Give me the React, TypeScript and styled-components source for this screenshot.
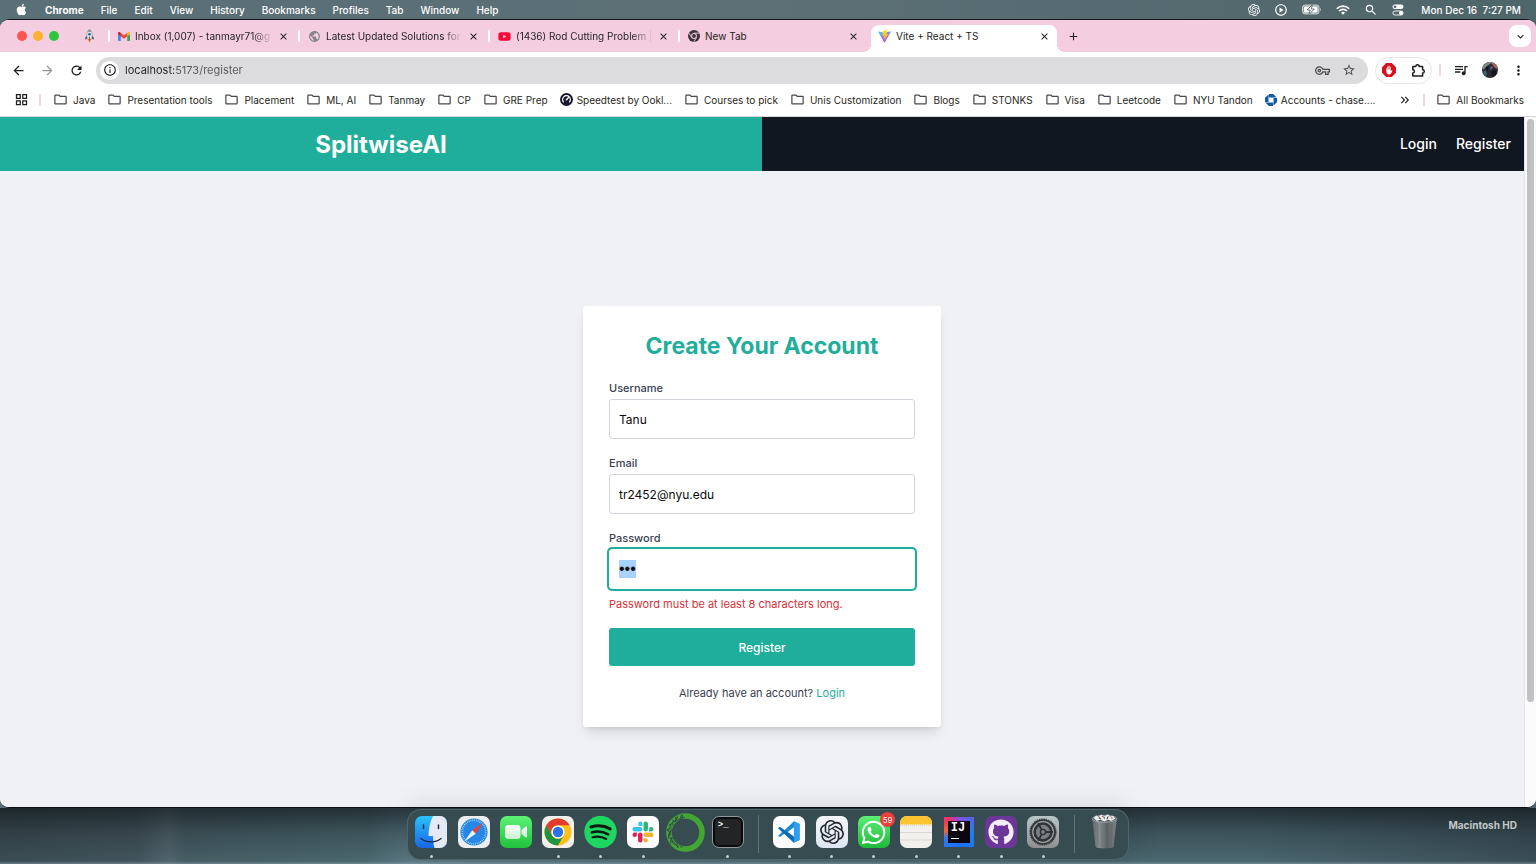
import React, { useEffect, useRef } from 'react';
import styled, { createGlobalStyle, css } from 'styled-components';
import { FaApple, FaYoutube, FaWhatsapp, FaGithub } from 'react-icons/fa';
import { SiOpenai } from 'react-icons/si';
import {
  MdArrowBack, MdArrowForward, MdRefresh, MdInfoOutline, MdOutlineVpnKey, MdStarBorder,
  MdQueueMusic, MdMoreVert, MdClose, MdAdd, MdKeyboardArrowDown,
  MdKeyboardDoubleArrowRight, MdPublic, MdOutlineFolder, MdOutlineGridView,
  MdOutlinePlayCircle, MdSearch,
} from 'react-icons/md';

const teal = '#1fae9b';
const pink = '#f4cde0';
const chromeInk = '#1f1f21';

const GlobalStyle = createGlobalStyle`
  *, *::before, *::after { box-sizing: border-box; }
  body { margin: 0; font-family: Inter, "Liberation Sans", sans-serif; background: #3b4f55; }
  button, input { font: inherit; margin: 0; }
  button { border: 0; padding: 0; background: none; color: inherit; cursor: pointer; }
  a { color: inherit; text-decoration: none; }
  svg { display: block; flex: none; }
`;

const Desktop = styled.div`
  height: 100vh;
  display: flex;
  flex-direction: column;
  background: linear-gradient(90deg, #5a6f76, #5c7076 50%, #4e656a);
`;

/* ---------- system menu bar ---------- */

const MenuBar = styled.header`
  height: 19px;
  flex: none;
  display: flex;
  align-items: center;
  justify-content: space-between;
  padding: 0 15px;
  color: #fff;
  font-size: 10px;
  font-weight: 500;
  white-space: nowrap;
`;

const MenuList = styled.nav`
  display: flex;
  align-items: center;
  gap: 17px;
`;

const MenuItem = styled.button<{ $strong?: boolean }>`
  font-weight: ${(p) => (p.$strong ? 700 : 500)};
`;

const StatusList = styled.div`
  display: flex;
  align-items: center;
  gap: 14px;
`;

const Clock = styled.time`
  margin-left: 3px;
  white-space: pre;
`;

/* ---------- browser window ---------- */

const Window = styled.div`
  flex: 1;
  min-height: 0;
  display: flex;
  flex-direction: column;
  border-top: 1px solid #14161c;
  border-bottom: 1px solid #0b0f12;
  border-radius: 9px;
  background: #fff;
  overflow: hidden;
`;

const TabStrip = styled.div`
  height: 32px;
  flex: none;
  display: flex;
  align-items: center;
  padding: 0 5px 0 17px;
  background: ${pink};
  color: ${chromeInk};
  font-size: 10px;
`;

const Lights = styled.div`
  display: flex;
  gap: 6px;
  width: 66px;
`;

const Light = styled.button<{ $color: string }>`
  width: 10px;
  height: 10px;
  border-radius: 50%;
  background: ${(p) => p.$color};
`;

const PinnedTab = styled.div`
  width: 25px;
`;

const Tab = styled.div<{ $active?: boolean }>`
  position: relative;
  flex: 0 1 190px;
  min-width: 60px;
  height: 32px;
  display: flex;
  align-items: center;
  gap: 5px;
  padding: 0 9px 0 8px;
  border-left: 2px solid transparent;

  ${(p) => !p.$active && css`
    &::before {
      content: '';
      position: absolute;
      left: -2px;
      top: 10px;
      width: 2px;
      height: 12px;
      background: #fff;
    }
  `}

  ${(p) => p.$active && css`
    flex-basis: 186px;
    height: 27px;
    margin-left: 3px;
    padding: 0 7px 5px 5px;
    align-self: flex-end;
    background: #fff;
    border-radius: 8px 8px 0 0;

    &::before, &::after {
      content: '';
      position: absolute;
      bottom: 0;
      width: 8px;
      height: 8px;
    }
    &::before {
      left: -10px;
      background: radial-gradient(circle at 0 0, ${pink} 8px, #fff 8px);
    }
    &::after {
      right: -8px;
      background: radial-gradient(circle at 100% 0, ${pink} 8px, #fff 8px);
    }
  `}
`;

const TabTitle = styled.span<{ $fade?: boolean }>`
  flex: 1;
  overflow: hidden;
  white-space: nowrap;
  ${(p) => p.$fade && css`
    mask-image: linear-gradient(90deg, #000 85%, transparent);
  `}
`;

const IconButton = styled.button`
  display: grid;
  place-items: center;
  flex: none;
`;

const NewTabButton = styled(IconButton)`
  margin-left: 10px;
`;

const TabSearchButton = styled(IconButton)`
  width: 22px;
  height: 22px;
  margin-left: auto;
  border-radius: 8px;
  background: #fff;
`;

const Toolbar = styled.div`
  height: 36px;
  flex: none;
  display: flex;
  align-items: center;
  padding: 0 10px 0 11px;
  color: ${chromeInk};
`;

const NavButtons = styled.div`
  display: flex;
  gap: 14px;
  width: 85px;
`;

const AddressBar = styled.form`
  flex: 1;
  height: 27px;
  display: flex;
  align-items: center;
  gap: 6px;
  padding: 0 12px 0 4px;
  border-radius: 14px;
  background: #dcdcde;
`;

const SiteInfo = styled(IconButton)`
  width: 19px;
  height: 19px;
  border-radius: 50%;
  background: #fff;
`;

const AddressInput = styled.input`
  flex: 1;
  min-width: 0;
  padding: 0;
  border: 0;
  outline: 0;
  font-size: 11px;
  color: transparent;
  background: linear-gradient(90deg, #222226 49px, #57575b 49px);
  background-clip: text;
`;

const AddressActions = styled.div`
  display: flex;
  gap: 12px;
  color: #4b4b4f;
`;

const Extensions = styled.div`
  display: flex;
  align-items: center;
  gap: 15px;
  height: 27px;
  margin-left: 7px;
  padding: 0 5px 0 6px;
  border: 1px solid #ebe3e8;
  border-radius: 14px;
`;

const PinkRule = styled.span<{ $space: number }>`
  width: 2px;
  height: 12px;
  margin: 0 ${(p) => p.$space}px;
  background: #f6d3e4;
  flex: none;
`;

const ToolbarEnd = styled.div`
  display: flex;
  align-items: center;
  gap: 13px;
  margin-left: 5px;
`;

const BookmarksBar = styled.nav`
  height: 29px;
  flex: none;
  display: flex;
  align-items: center;
  padding: 0 12px 5px 14px;
  border-bottom: 1px solid #d6d6da;
  color: ${chromeInk};
  font-size: 10px;
  white-space: nowrap;
`;

const BookmarkList = styled.div`
  flex: 1;
  min-width: 0;
  display: flex;
  gap: 12px;
  padding-left: 2px;
  overflow: hidden;
`;

const Bookmark = styled.a<{ $site?: boolean }>`
  display: flex;
  align-items: center;
  gap: ${(p) => (p.$site ? 4 : 5)}px;
  flex: none;
`;

/* ---------- web page ---------- */

const Viewport = styled.div`
  flex: 1;
  min-height: 0;
  display: flex;
`;

const Page = styled.div`
  flex: 1;
  min-width: 0;
  overflow-y: auto;
  scrollbar-width: none;
  background: #f0f1f5;
`;

const ScrollTrack = styled.div`
  width: 12px;
  flex: none;
  padding: 2px;
  border-left: 1px solid #e4e4e6;
  background: #fafafa;
`;

const ScrollThumb = styled.div`
  width: 7px;
  height: 85%;
  border-radius: 4px;
  background: #c1c1c3;
`;

const SiteHeader = styled.header`
  display: grid;
  grid-template-columns: 1fr 1fr;
  height: 54px;
  color: #fff;
`;

const Brand = styled.a`
  display: grid;
  place-items: center;
  background: ${teal};
  font-size: 24px;
  font-weight: 700;
`;

const SiteNav = styled.nav`
  display: flex;
  align-items: center;
  justify-content: flex-end;
  gap: 19px;
  padding: 0 13px 2px;
  background: #111720;
  font-size: 14px;
  font-weight: 500;
`;

const Main = styled.main`
  min-height: calc(100vh - 173px);
  display: grid;
  place-items: center;
`;

const Card = styled.form`
  width: 358px;
  max-width: 100%;
  display: flex;
  flex-direction: column;
  padding: 26px;
  border-radius: 3px;
  background: #fff;
  box-shadow: 0 8px 12px -3px rgba(0, 0, 0, 0.12), 0 3px 5px -2px rgba(0, 0, 0, 0.08);
`;

const CardTitle = styled.h1`
  margin: 0 0 20px;
  text-align: center;
  color: ${teal};
  font-size: 23px;
  line-height: 28px;
  font-weight: 700;
`;

const Field = styled.div`
  display: flex;
  flex-direction: column;
  margin-bottom: 16px;
`;

const FieldLabel = styled.label`
  margin-bottom: 3px;
  color: #374151;
  font-size: 11px;
  line-height: 16px;
  font-weight: 500;
`;

const TextInput = styled.input`
  height: 40px;
  padding: 0 9px;
  border: 1px solid #d1d5db;
  border-radius: 3px;
  outline: 0;
  background: #fff;
  color: #0b0b0d;
  font-size: 12px;
  line-height: 19px;
  &::selection { background: #a8d1ff; color: #0b0b0d; }
`;

const PasswordInput = styled(TextInput)`
  border-color: #fff;
  box-shadow: 0 0 0 2px ${teal};
  font-family: "Liberation Sans", sans-serif;
  font-size: 16px;
`;

const FieldError = styled.p`
  margin: 7px 0 0;
  color: #dc3038;
  font-size: 11px;
  line-height: 16px;
`;

const SubmitButton = styled.button`
  height: 38px;
  border-radius: 3px;
  background: ${teal};
  color: #fff;
  font-size: 12px;
  font-weight: 500;
`;

const CardFooter = styled.p`
  margin: 19px 0 0;
  text-align: center;
  color: #374151;
  font-size: 11px;
  line-height: 16px;
  a { color: ${teal}; }
`;

/* ---------- dock ---------- */

const DockArea = styled.footer`
  height: 56px;
  flex: none;
  display: grid;
  grid-template-columns: 1fr minmax(0, 722px) 1fr;
  background:
    linear-gradient(180deg, rgba(14, 20, 24, 0.66), rgba(14, 20, 24, 0.24) 45%, transparent 95%, rgba(150, 175, 190, 0.5)),
    linear-gradient(90deg, #3b4d54, #42555c 9%, #52656c 11%, #465d64 12%, #4a686e 24%, #5f7d8a 27%, #4b686f 60%, #4a666f 82%, #3b4e57);
`;

const Dock = styled.nav`
  position: relative;
  grid-column: 2;
  height: 51px;
  margin-top: 1px;
  padding: 0 2px;
  display: flex;
  border: 1px solid rgba(150, 175, 180, 0.25);
  border-radius: 14px;
  background: #364c51;
  box-shadow: 0 0 30px rgba(0, 0, 0, 0.14);
`;

const DockSlot = styled.button<{ $running?: boolean }>`
  position: relative;
  flex: 1;
  min-width: 0;
  display: flex;
  flex-direction: column;
  align-items: center;
  padding-top: 6px;
  &::after {
    content: '';
    width: 3px;
    height: 3px;
    margin-top: 7px;
    border-radius: 50%;
    background: ${(p) => (p.$running ? '#c3cccd' : 'transparent')};
  }
`;

const DockRule = styled.span`
  width: 19px;
  padding: 5px 9px;
  &::before {
    content: '';
    display: block;
    width: 1px;
    height: 38px;
    background: #60757a;
  }
`;

const Badge = styled.span`
  position: absolute;
  top: 2px;
  right: 0;
  width: 15px;
  height: 15px;
  display: grid;
  place-items: center;
  border-radius: 50%;
  background: #e8403a;
  color: #fff;
  font-size: 8px;
`;

const DriveLabel = styled.span`
  justify-self: end;
  margin: 11px 19px 0 0;
  color: #c3c8ca;
  font-size: 10px;
  line-height: 13px;
  font-weight: 700;
`;

const Tile = styled.span<{ $bg: string; $color?: string }>`
  width: 32px;
  height: 32px;
  flex: none;
  display: grid;
  place-items: center;
  border-radius: 7px;
  background: ${(p) => p.$bg};
  color: ${(p) => p.$color || '#fff'};
`;

/* ---------- small drawings ---------- */

const Battery = () => (
  <svg width="20" height="11" viewBox="0 0 20 11">
    <rect x="0.5" y="1" width="16.5" height="9" rx="2.6" fill="#fff" fillOpacity="0.35" stroke="#fff" strokeOpacity="0.65" />
    <rect x="2" y="2.4" width="13.5" height="6.2" rx="1.4" fill="#fff" />
    <path d="M18.2 3.8c1 .4 1 3 0 3.4z" fill="#fff" fillOpacity="0.7" />
    <path d="M10.4.6 5.2 6h3l-1.2 4.4L12.4 5H9.3z" fill="#fff" stroke="#566a70" strokeWidth="0.9" />
  </svg>
);

const Wifi = () => (
  <svg width="14" height="10" viewBox="0 0 14 10" fill="none" stroke="#fff" strokeWidth="1.6">
    <path d="M.8 3.7a8.8 8.8 0 0 1 12.4 0M3 6a5.7 5.7 0 0 1 8 0" />
    <path d="M7 9.8 5 7.8a2.9 2.9 0 0 1 4 0z" fill="#fff" stroke="none" />
  </svg>
);

const ControlCenter = () => (
  <svg width="12" height="12" viewBox="0 0 12 12">
    <rect x="0.5" y="0.5" width="11" height="4.6" rx="2.3" fill="#fff" />
    <circle cx="3" cy="2.8" r="1.4" fill="#566a70" />
    <rect x="0.9" y="7" width="10.2" height="4" rx="2" fill="none" stroke="#fff" strokeWidth="0.9" />
    <circle cx="9" cy="9" r="2" fill="#fff" />
  </svg>
);

const Rocket = () => (
  <svg width="13" height="14" viewBox="0 0 13 14">
    <path d="M4 6.500 2.200 8.600V10.800L4.600 9.400zM9 6.500l1.800 2.100V10.800L8.400 9.400z" fill="#46617d" />
    <path d="M6.500.2C8.600 2 9.400 4 9.200 6.400L8.600 10H4.400L3.800 6.400C3.600 4 4.400 2 6.500.2z" fill="#dde4ea" stroke="#8592a0" strokeWidth="0.5" />
    <path d="M6.500.2C7.500 1.100 8.100 1.900 8.500 2.800H4.500C4.900 1.900 5.500 1.100 6.500.2z" fill="#7d8b99" />
    <circle cx="6.500" cy="5.200" r="1.300" fill="#2e5f91" />
    <path d="M4.700 10h3.600L6.500 13.800z" fill="#e8742c" />
    <path d="M6 7.500h1v3.500H6z" fill="#b5463b" />
  </svg>
);

const Gmail = () => (
  <svg width="12" height="9" viewBox="0 0 12 9">
    <path d="M0 1.600V8.200c0 .4.4.8.8.8h2V4z" fill="#4285f4" />
    <path d="M12 1.600V8.200c0 .4-.4.8-.8.8h-2V4z" fill="#34a853" />
    <path d="M9.200 1V4.300L12 2.200V1.200C12 0 10.700-.4 9.900.3z" fill="#fbbc04" />
    <path d="M2.800 4.300V1L6 3.400 9.200 1v3.300L6 6.700z" fill="#ea4335" />
    <path d="M0 1.200V2.200l2.800 2.100V1L2.100.3C1.300-.4 0 0 0 1.200z" fill="#c5221f" />
  </svg>
);

const ChromeMono = () => (
  <svg width="12" height="12" viewBox="0 0 12 12">
    <circle cx="6" cy="6" r="6" fill="#3a3338" />
    <circle cx="6" cy="6" r="2.900" fill="#f4cde0" />
    <circle cx="6" cy="6" r="1.900" fill="#3a3338" />
    <path d="M6 3.100h5.200M3.500 7.400.9 3M8.500 7.400 5.900 11.900" stroke="#f4cde0" strokeWidth="0.9" />
  </svg>
);

const Vite = () => (
  <svg width="13" height="13" viewBox="0 0 32 32">
    <defs>
      <linearGradient id="viteBody" x1="0" y1="0" x2="0.600" y2="1">
        <stop offset="0" stopColor="#41d1ff" />
        <stop offset="1" stopColor="#bd34fe" />
      </linearGradient>
      <linearGradient id="viteBolt" x1="0" y1="0" x2="0" y2="1">
        <stop offset="0" stopColor="#ffdd35" />
        <stop offset="1" stopColor="#ffa800" />
      </linearGradient>
    </defs>
    <path d="M31.300 4.700 16.700 30.800c-.3.500-1 .5-1.300 0L.6 4.700c-.4-.6.1-1.300.8-1.200L16 6.100l14.500-2.600c.7-.1 1.200.6.8 1.200z" fill="url(#viteBody)" />
    <path d="m22.500.4-10.800 2.100c-.2 0-.3.200-.3.400l-.7 11.200c0 .3.200.5.500.4l3-.7c.3-.1.500.2.500.5l-.9 4.400c-.1.300.2.500.5.400l1.800-.5c.3-.1.600.1.500.4l-1.400 6.900c-.1.400.5.700.7.300L25 10.500c.2-.3-.1-.6-.4-.6l-3.100.6c-.3.100-.5-.2-.5-.5l2-7.100c.1-2.500-.2-2.500-.5-2.500z" fill="url(#viteBolt)" />
  </svg>
);

const Speedtest = () => (
  <svg width="13" height="13" viewBox="0 0 13 13" fill="none">
    <circle cx="6.500" cy="6.500" r="6.500" fill="#17172c" />
    <path d="M3.800 9.400a3.900 3.900 0 1 1 5.400 0" stroke="#fff" strokeWidth="1.200" />
    <path d="m6 7.300 2.800-3.100" stroke="#fff" strokeWidth="1.300" />
  </svg>
);

const Chase = () => (
  <svg width="12" height="12" viewBox="0 0 12 12" fill="#1159a8">
    <path d="M3.900 0h4.300l3.400 3.500H3.900zM12 3.900v4.300l-3.500 3.400V3.900zM8.100 12H3.800L.4 8.500h7.700zM0 8.100V3.800L3.500.4v7.700z" />
  </svg>
);

const AdBlock = () => (
  <svg width="14" height="14" viewBox="0 0 14 14">
    <path d="M4.200 0h5.600L14 4.200v5.600L9.800 14H4.200L0 9.800V4.200z" fill="#d5121e" />
    <path d="M4.300 5.200v3.300c0 1.600 1.200 2.900 2.800 2.900 2 0 2.600-1.600 3.300-3.900l-.8-.3-.9 1V3.700h-.8V6.500h-.4V2.800h-.9v3.700h-.4V3.500h-.9v3.300h-.4V5.200z" fill="#fff" />
  </svg>
);

const Puzzle = () => (
  <svg width="15" height="15" viewBox="0 0 15 15" fill="none" stroke="#1f1f21" strokeWidth="1.500" strokeLinejoin="round">
    <path d="M1.800 3.400h3a1.700 1.700 0 0 1 3.400 0h3.400v3.300a1.700 1.700 0 0 1 0 3.400v3H1.800v-3.200a1.600 1.600 0 0 0 0-3.200z" />
  </svg>
);

const Avatar = () => (
  <svg width="16" height="16" viewBox="0 0 16 16">
    <defs><clipPath id="avatarClip"><circle cx="8" cy="8" r="8" /></clipPath></defs>
    <g clipPath="url(#avatarClip)">
      <path d="M0 0h16v16H0z" fill="#2b2a35" />
      <path d="M0 4 6 0h5L5 4 1 8z" fill="#7b8a83" />
      <path d="m9 1 5 0 2 6-3-1z" fill="#a5654f" />
      <path d="m8 5 2-1 1 2-3 2z" fill="#4e5f86" />
      <path d="m1 10 3-2 1 5-2 1z" fill="#39626a" />
      <path d="m4 5 3-1-1 4-2 1zM9 10l4-3 2 5-5 3z" fill="#17151c" />
    </g>
  </svg>
);

const Finder = () => (
  <svg width="32" height="32" viewBox="0 0 32 32">
    <defs>
      <clipPath id="finderClip"><rect width="32" height="32" rx="7" /></clipPath>
      <linearGradient id="finderBlue" x1="0" y1="0" x2="0" y2="1">
        <stop offset="0" stopColor="#29c1fb" /><stop offset="1" stopColor="#1b66ea" />
      </linearGradient>
    </defs>
    <g clipPath="url(#finderClip)">
      <path d="M0 0h32v32H0z" fill="url(#finderBlue)" />
      <path d="M18 0h14v32H19.500c-.9-3.500-1.400-7-1.500-12h-4.500C13.600 12.500 15 6 18 0z" fill="#e5e9f3" />
      <path d="M8.500 9v3.500M23.500 9v3.500" stroke="#1c2c44" strokeWidth="1.500" strokeLinecap="round" />
      <path d="M6 22.500c5.500 4.500 14.500 4.500 20 0" stroke="#1c2c44" strokeWidth="1.400" fill="none" strokeLinecap="round" />
    </g>
  </svg>
);

const Safari = () => (
  <svg width="32" height="32" viewBox="0 0 32 32">
    <rect width="32" height="32" rx="7" fill="#eceef0" />
    <circle cx="16" cy="16" r="13.600" fill="#2588e6" />
    <circle cx="16" cy="16" r="11.800" fill="none" stroke="#d5e9fb" strokeWidth="1.800" strokeDasharray="0.600 1.250" />
    <path d="M25.500 6.500 17.800 17.800 14.200 14.200z" fill="#e8403a" />
    <path d="M6.500 25.500 14.200 14.200l3.600 3.600z" fill="#f1f3f5" />
  </svg>
);

const FaceTime = () => (
  <svg width="32" height="32" viewBox="0 0 32 32">
    <defs>
      <linearGradient id="facetimeBg" x1="0" y1="0" x2="0" y2="1">
        <stop offset="0" stopColor="#5df274" /><stop offset="1" stopColor="#20c23c" />
      </linearGradient>
      <linearGradient id="facetimeCam" x1="0" y1="0" x2="0" y2="1">
        <stop offset="0" stopColor="#fff" /><stop offset="1" stopColor="#c7f3cd" />
      </linearGradient>
    </defs>
    <rect width="32" height="32" rx="7" fill="url(#facetimeBg)" />
    <rect x="5" y="9" width="15.500" height="14" rx="3.500" fill="url(#facetimeCam)" />
    <path d="m21.500 14 4.300-3.500c.5-.4 1.200 0 1.200.6v9.800c0 .6-.7 1-1.200.6L21.500 18z" fill="url(#facetimeCam)" />
  </svg>
);

const ChromeApp = () => (
  <svg width="32" height="32" viewBox="0 0 32 32">
    <rect width="32" height="32" rx="7" fill="#f3f1ee" />
    <circle cx="16" cy="16" r="13.500" fill="#fbc116" />
    <path d="M4.310 9.250A13.500 13.500 0 0 1 27.690 9.250H16A6.750 6.750 0 0 0 10.150 19.380z" fill="#e33b2e" />
    <path d="M4.310 9.250 10.150 19.380A6.750 6.750 0 0 0 21.850 19.380L16 29.500A13.500 13.500 0 0 1 4.310 9.250z" fill="#229342" />
    <circle cx="16" cy="16" r="6.600" fill="#fff" />
    <circle cx="16" cy="16" r="5.200" fill="#2a73e8" />
  </svg>
);

const Spotify = () => (
  <svg width="33" height="32" viewBox="0 0 33 32" fill="none" stroke="#0d1a12" strokeLinecap="round">
    <circle cx="16.500" cy="16" r="16.200" fill="#1fd760" stroke="none" />
    <path d="M7 11c6.500-1.900 13.500-1.300 19.200 1.900" strokeWidth="3" />
    <path d="M7.800 16.400c5.500-1.600 11.500-.9 16.400 1.900" strokeWidth="2.500" />
    <path d="M8.500 21.300c4.700-1.300 9.500-.8 13.700 1.700" strokeWidth="2.100" />
  </svg>
);

const SlackLogo = () => (
  <svg width="32" height="32" viewBox="0 0 32 32">
    <rect width="32" height="32" rx="7" fill="#fff" />
    <g transform="translate(5.500 5.500) scale(0.875)">
      <path d="M5 15.100a2.500 2.500 0 1 1-2.500-2.500H5zM6.300 15.100a2.500 2.500 0 1 1 5.100 0v6.400a2.500 2.500 0 1 1-5.100 0z" fill="#e01e5a" />
      <path d="M8.800 5a2.500 2.500 0 1 1 2.600-2.500V5zM8.800 6.300a2.500 2.500 0 1 1 0 5.100H2.500a2.500 2.500 0 1 1 0-5.100z" fill="#36c5f0" />
      <path d="M19 8.800a2.500 2.500 0 1 1 2.500 2.600H19zM17.700 8.800a2.500 2.500 0 1 1-5.100 0V2.500a2.500 2.500 0 1 1 5.100 0z" fill="#2eb67d" />
      <path d="M15.200 19a2.500 2.500 0 1 1-2.600 2.500V19zM15.200 17.700a2.500 2.500 0 1 1 0-5.100h6.300a2.500 2.500 0 1 1 0 5.100z" fill="#ecb22e" />
    </g>
  </svg>
);

/* Keeps icons taller than the usual tile centred on the same line. */
const TallIcon = styled.span`
  height: 32px;
  flex: none;
  display: grid;
  align-content: center;
`;

const Anaconda = () => (
  <TallIcon>
    <svg width="39" height="39" viewBox="0 0 39 39" fill="none">
      <circle cx="19.500" cy="19.500" r="16.500" stroke="#43a532" strokeWidth="5.600" />
      <path d="M19 4.500C11 5 5 11 4.500 19S10 33.500 18 34.500" stroke="#364c51" strokeWidth="0.900" strokeDasharray="3 1.500" />
      <path d="M16 1.500c1 3 0 5-3 5.500M11 3c1 3-1 5.500-4 5.500M7 6.500c.5 3-1.500 5-4 5.500M4 11c1 2.500 0 5-3 6M1.500 17c2 1.500 4 4.500 1 7M6.500 17c-3 1.500-4 4-4 8M2.500 25c3 0 4 1.500 4 5M8 24.500c-3 .5-4 3-3 6M7 31c2-.5 4 .5 5 4M16 2c-2 1-2 4 1 5M10 4c-1 2 0 4 3 4.500" stroke="#364c51" strokeWidth="1.100" />
    </svg>
  </TallIcon>
);

const TerminalGlyph = styled.span`
  width: 32px;
  height: 32px;
  flex: none;
  padding: 4px 5px;
  border: 1px solid #8e979b;
  border-radius: 7px;
  box-shadow: inset 0 0 0 2px #0a0a0b;
  background: #232426;
  color: #f1f1f1;
  text-align: left;
  font: 700 9px/8px "Liberation Mono", monospace;
`;

const VsCode = () => (
  <svg width="24" height="24" viewBox="0 0 24 24">
    <path d="M17 1.300 22.600 3.900V20.100L17 22.700 7.300 13.800 3 17l-1.900-1L5 12 1.100 8 3 7l4.300 3.200zM17 7.300 10.800 12 17 16.700z" fill="#1f8ad2" fillRule="evenodd" />
    <path d="m17 1.300 5.600 2.600V20.100L17 22.700z" fill="#2f9ff0" />
    <path d="M1.100 8 3 7l14 9.700v6L1.100 8z" fill="#0f6cb6" />
  </svg>
);

const Notes = () => (
  <svg width="32" height="32" viewBox="0 0 32 32">
    <defs><clipPath id="notesClip"><rect width="32" height="32" rx="7" /></clipPath></defs>
    <g clipPath="url(#notesClip)">
      <path d="M0 0h32v32H0z" fill="#f3f1ed" />
      <path d="M0 0h32v8.500H0z" fill="#fcc42f" />
      <path d="M0 9.600h32" stroke="#c8c3b8" strokeWidth="0.800" strokeDasharray="1 1" />
      <path d="M0 16.500h32M0 24h32" stroke="#d8d5cf" strokeWidth="0.900" />
    </g>
  </svg>
);

const IdeaFrame = styled.span`
  width: 30px;
  height: 30px;
  flex: none;
  margin: 1px 0;
  padding: 4px;
  background: conic-gradient(from 0deg, #8a4be0, #1e7ff0 25%, #1f6ff2 50%, #2b7af0 68%, #f0692f 76%, #fb2f63 88%, #8a4be0);
`;

const IdeaCore = styled.span`
  display: block;
  width: 22px;
  height: 22px;
  padding: 2px 3px;
  background: #0b0610;
  color: #fff;
  text-align: left;
  font: 700 12px/11px "Liberation Mono", monospace;
  &::after {
    content: '';
    display: block;
    width: 8px;
    height: 1px;
    margin-top: 4px;
    background: #fff;
  }
`;

const Settings = () => (
  <svg width="32" height="32" viewBox="0 0 32 32" fill="none">
    <defs>
      <linearGradient id="settingsBg" x1="0" y1="0" x2="0" y2="1">
        <stop offset="0" stopColor="#b9c6c6" /><stop offset="1" stopColor="#8f8f90" />
      </linearGradient>
    </defs>
    <rect width="32" height="32" rx="7" fill="url(#settingsBg)" />
    <circle cx="16" cy="16" r="12.800" fill="#3a3e40" />
    <circle cx="16" cy="16" r="12.800" stroke="#2f3335" strokeWidth="1.600" strokeDasharray="1 0.800" />
    <circle cx="16" cy="16" r="10.300" stroke="#9ba1a2" strokeWidth="1.200" />
    <circle cx="16" cy="16" r="7.400" fill="#7b8182" />
    <circle cx="16" cy="16" r="8.200" stroke="#303436" strokeWidth="2" />
    <path d="M18 16h8M15 14.300 11 7.300M15 17.700 11 24.700" stroke="#303436" strokeWidth="1.800" />
    <circle cx="16" cy="16" r="2.600" fill="#7b8182" stroke="#303436" strokeWidth="1.400" />
  </svg>
);

const Trash = () => (
  <TallIcon>
    <svg width="27" height="36" viewBox="0 0 28 38">
      <defs>
        <linearGradient id="trashBody" x1="0" y1="0" x2="1" y2="0">
          <stop offset="0" stopColor="#5d6568" /><stop offset="0.300" stopColor="#868e90" />
          <stop offset="0.600" stopColor="#5c6366" /><stop offset="1" stopColor="#7b8284" />
        </linearGradient>
      </defs>
      <path d="M1 5h26l-3.500 29.500c-.4 2.200-18.600 2.200-19 0z" fill="url(#trashBody)" />
      <ellipse cx="14" cy="5" rx="13" ry="3.600" fill="#4c5356" stroke="#b5bbbd" strokeWidth="0.800" />
      <path d="m2.500 4.500 2.500-3 3 1.500L10.500.5l3.500 2L17.500.3l2.500 2.400 3-.9 2.500 3.200-4.500 2.500-3-1.500-4 2-4.500-2-3.500 1.300z" fill="#e9ebec" />
      <path d="m8 3.500 2 2M18 2.500l-1.500 3M13 3.500l1.500 1" stroke="#3c4447" strokeWidth="1.100" />
      <path d="m11.500 2 1.500.8M21 4l1.500.4" stroke="#b5473d" strokeWidth="1.200" />
      <path d="M6 11l1.500 23M11 12l.6 23M17 12l-.6 23M22 11l-1.500 23" stroke="#4f5659" strokeWidth="0.600" opacity="0.400" />
    </svg>
  </TallIcon>
);

/* ---------- data ---------- */

const menus = ['File', 'Edit', 'View', 'History', 'Bookmarks', 'Profiles', 'Tab', 'Window', 'Help'];

const tabs = [
  { title: 'Inbox (1,007) - tanmayr71@g', icon: <Gmail />, fade: true },
  { title: 'Latest Updated Solutions for', icon: <MdPublic size={13} color="#858589" />, fade: true },
  { title: '(1436) Rod Cutting Problem |', icon: <FaYoutube size={13} color="#f7093a" />, fade: true },
  { title: 'New Tab', icon: <ChromeMono />, fade: false },
];

const folder = <MdOutlineFolder size={15} color="#4a4a4e" />;

const bookmarks: { name: string; icon?: React.ReactNode }[] = [
  { name: 'Java' }, { name: 'Presentation tools' }, { name: 'Placement' }, { name: 'ML, AI' },
  { name: 'Tanmay' }, { name: 'CP' }, { name: 'GRE Prep' },
  { name: 'Speedtest by Ookl...', icon: <Speedtest /> },
  { name: 'Courses to pick' }, { name: 'Unis Customization' }, { name: 'Blogs' }, { name: 'STONKS' },
  { name: 'Visa' }, { name: 'Leetcode' }, { name: 'NYU Tandon' },
  { name: 'Accounts - chase....', icon: <Chase /> },
];

export default function App() {
  const passwordRef = useRef<HTMLInputElement>(null);

  useEffect(() => {
    passwordRef.current?.focus();
    passwordRef.current?.select();
  }, []);

  return (
    <>
      <GlobalStyle />
      <Desktop>
        <MenuBar>
          <MenuList>
            <IconButton aria-label="Apple menu"><FaApple size={13} /></IconButton>
            <MenuItem $strong>Chrome</MenuItem>
            {menus.map((m) => <MenuItem key={m}>{m}</MenuItem>)}
          </MenuList>
          <StatusList>
            <SiOpenai size={12} />
            <MdOutlinePlayCircle size={14} />
            <Battery />
            <Wifi />
            <MdSearch size={14} />
            <ControlCenter />
            <Clock>Mon Dec 16  7:27 PM</Clock>
          </StatusList>
        </MenuBar>

        <Window>
          <TabStrip>
            <Lights>
              <Light $color="#fb5651" aria-label="Close window" />
              <Light $color="#fdb133" aria-label="Minimise window" />
              <Light $color="#2fc440" aria-label="Zoom window" />
            </Lights>
            <PinnedTab><Rocket /></PinnedTab>
            {tabs.map((t) => (
              <Tab key={t.title}>
                {t.icon}
                <TabTitle $fade={t.fade}>{t.title}</TabTitle>
                <IconButton aria-label="Close tab"><MdClose size={11} /></IconButton>
              </Tab>
            ))}
            <Tab $active>
              <Vite />
              <TabTitle>Vite + React + TS</TabTitle>
              <IconButton aria-label="Close tab"><MdClose size={11} /></IconButton>
            </Tab>
            <NewTabButton aria-label="New tab"><MdAdd size={13} /></NewTabButton>
            <TabSearchButton aria-label="Search tabs"><MdKeyboardArrowDown size={13} /></TabSearchButton>
          </TabStrip>

          <Toolbar>
            <NavButtons>
              <IconButton aria-label="Back"><MdArrowBack size={15} /></IconButton>
              <IconButton aria-label="Forward"><MdArrowForward size={15} color="#949498" /></IconButton>
              <IconButton aria-label="Reload"><MdRefresh size={15} /></IconButton>
            </NavButtons>
            <AddressBar onSubmit={(e) => e.preventDefault()}>
              <SiteInfo type="button" aria-label="Site information"><MdInfoOutline size={14} /></SiteInfo>
              <AddressInput aria-label="Address" defaultValue="localhost:5173/register" spellCheck={false} />
              <AddressActions>
                <IconButton type="button" aria-label="Passwords"><MdOutlineVpnKey size={15} /></IconButton>
                <IconButton type="button" aria-label="Bookmark this page"><MdStarBorder size={14} /></IconButton>
              </AddressActions>
            </AddressBar>
            <Extensions>
              <IconButton aria-label="Ad blocker"><AdBlock /></IconButton>
              <IconButton aria-label="Extensions"><Puzzle /></IconButton>
            </Extensions>
            <PinkRule $space={7} />
            <ToolbarEnd>
              <IconButton aria-label="Media controls"><MdQueueMusic size={16} /></IconButton>
              <IconButton aria-label="Profile"><Avatar /></IconButton>
              <IconButton aria-label="Chrome menu"><MdMoreVert size={15} /></IconButton>
            </ToolbarEnd>
          </Toolbar>

          <BookmarksBar aria-label="Bookmarks">
            <IconButton aria-label="Tab groups"><MdOutlineGridView size={15} /></IconButton>
            <PinkRule $space={10} />
            <BookmarkList>
              {bookmarks.map((b) => (
                <Bookmark key={b.name} href="#" $site={!!b.icon}>{b.icon ?? folder}{b.name}</Bookmark>
              ))}
            </BookmarkList>
            <IconButton aria-label="More bookmarks"><MdKeyboardDoubleArrowRight size={14} /></IconButton>
            <PinkRule $space={11} />
            <Bookmark href="#">{folder}All Bookmarks</Bookmark>
          </BookmarksBar>

          <Viewport>
            <Page>
              <SiteHeader>
                <Brand href="#">SplitwiseAI</Brand>
                <SiteNav>
                  <a href="#">Login</a>
                  <a href="#">Register</a>
                </SiteNav>
              </SiteHeader>
              <Main>
                <Card onSubmit={(e) => e.preventDefault()} noValidate>
                  <CardTitle>Create Your Account</CardTitle>
                  <Field>
                    <FieldLabel htmlFor="username">Username</FieldLabel>
                    <TextInput id="username" type="text" defaultValue="Tanu" />
                  </Field>
                  <Field>
                    <FieldLabel htmlFor="email">Email</FieldLabel>
                    <TextInput id="email" type="email" defaultValue="tr2452@nyu.edu" />
                  </Field>
                  <Field>
                    <FieldLabel htmlFor="password">Password</FieldLabel>
                    <PasswordInput id="password" type="password" defaultValue="abc" ref={passwordRef} aria-describedby="password-error" />
                    <FieldError id="password-error">Password must be at least 8 characters long.</FieldError>
                  </Field>
                  <SubmitButton type="submit">Register</SubmitButton>
                  <CardFooter>Already have an account? <a href="#">Login</a></CardFooter>
                </Card>
              </Main>
            </Page>
            <ScrollTrack aria-hidden="true"><ScrollThumb /></ScrollTrack>
          </Viewport>
        </Window>

        <DockArea>
          <Dock aria-label="Dock">
            <DockSlot $running aria-label="Finder"><Finder /></DockSlot>
            <DockSlot aria-label="Safari"><Safari /></DockSlot>
            <DockSlot aria-label="FaceTime"><FaceTime /></DockSlot>
            <DockSlot $running aria-label="Chrome"><ChromeApp /></DockSlot>
            <DockSlot $running aria-label="Spotify"><Spotify /></DockSlot>
            <DockSlot $running aria-label="Slack"><SlackLogo /></DockSlot>
            <DockSlot aria-label="Anaconda"><Anaconda /></DockSlot>
            <DockSlot $running aria-label="Terminal"><TerminalGlyph>&gt;_</TerminalGlyph></DockSlot>
            <DockRule />
            <DockSlot $running aria-label="Visual Studio Code"><Tile $bg="#fff"><VsCode /></Tile></DockSlot>
            <DockSlot $running aria-label="ChatGPT"><Tile $bg="linear-gradient(#f4f7fb, #dde6f2)" $color="#23262b"><SiOpenai size={24} /></Tile></DockSlot>
            <DockSlot $running aria-label="WhatsApp">
              <Tile $bg="linear-gradient(#5cf076, #1fb93a)"><FaWhatsapp size={27} /></Tile>
              <Badge>59</Badge>
            </DockSlot>
            <DockSlot $running aria-label="Notes"><Notes /></DockSlot>
            <DockSlot $running aria-label="IntelliJ IDEA"><IdeaFrame><IdeaCore>IJ</IdeaCore></IdeaFrame></DockSlot>
            <DockSlot $running aria-label="GitHub Desktop"><Tile $bg="#6c3699" $color="#f3eef8"><FaGithub size={26} /></Tile></DockSlot>
            <DockSlot $running aria-label="System Settings"><Settings /></DockSlot>
            <DockRule />
            <DockSlot aria-label="Trash"><Trash /></DockSlot>
          </Dock>
          <DriveLabel>Macintosh HD</DriveLabel>
        </DockArea>
      </Desktop>
    </>
  );
}
